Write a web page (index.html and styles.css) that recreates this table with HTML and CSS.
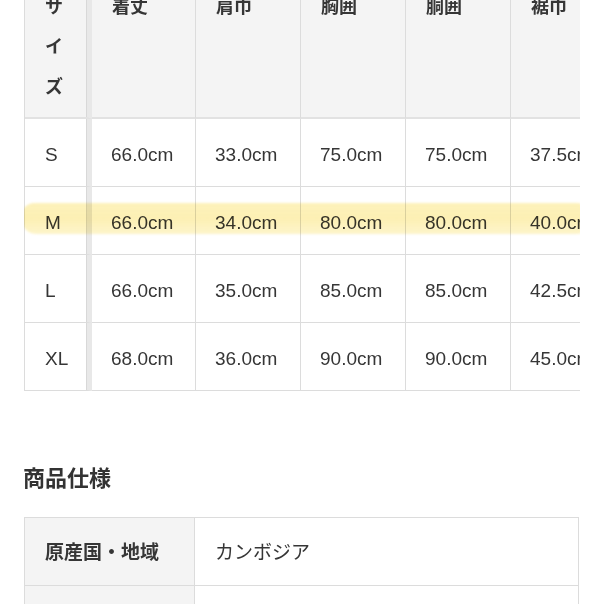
FILE: index.html
```html
<!DOCTYPE html>
<html lang="ja">
<head>
<meta charset="utf-8">
<title>サイズ表</title>
<link rel="stylesheet" href="styles.css">
</head>
<body>
<div class="page">
  <div class="size-wrap">
    <table class="size-table">
      <thead>
        <tr>
          <th class="c-first">サイズ</th>
          <th class="c-2">着丈</th>
          <th class="c-n">肩巾</th>
          <th class="c-n">胸囲</th>
          <th class="c-n">胴囲</th>
          <th class="c-n">裾巾</th>
        </tr>
      </thead>
      <tbody>
        <tr><td class="c-first">S</td><td>66.0cm</td><td>33.0cm</td><td>75.0cm</td><td>75.0cm</td><td>37.5cm</td></tr>
        <tr><td class="c-first">M</td><td>66.0cm</td><td>34.0cm</td><td>80.0cm</td><td>80.0cm</td><td>40.0cm</td></tr>
        <tr><td class="c-first">L</td><td>66.0cm</td><td>35.0cm</td><td>85.0cm</td><td>85.0cm</td><td>42.5cm</td></tr>
        <tr><td class="c-first">XL</td><td>68.0cm</td><td>36.0cm</td><td>90.0cm</td><td>90.0cm</td><td>45.0cm</td></tr>
      </tbody>
    </table>
    <div class="marker"></div>
  </div>

  <h2 class="spec-title">商品仕様</h2>
  <table class="spec-table">
    <tbody>
      <tr><th>原産国・地域</th><td>カンボジア</td></tr>
      <tr><th>素材</th><td>綿100%</td></tr>
    </tbody>
  </table>
</div>
</body>
</html>
```

FILE: styles.css
```css
html, body {
  margin: 0;
  padding: 0;
  background: #ffffff;
}

body {
  font-family: "Liberation Sans", "Noto Sans CJK JP", sans-serif;
  color: #363636;
  overflow: hidden;
}

.page {
  display: flex;
  flex-direction: column;
  align-items: flex-start;
}

.size-wrap {
  position: relative;
  margin-top: -35px;
  margin-left: 24px;
  width: 556px;
  overflow: hidden;
}

.size-table {
  border-collapse: separate;
  border-spacing: 0;
  table-layout: fixed;
  width: 592px;
  border-left: 1px solid #dcdcdc;
  box-shadow: 0 2px 2px rgba(0, 0, 0, 0.04);
}

.size-table th,
.size-table td {
  box-sizing: border-box;
  border-right: 1px solid #dcdcdc;
  border-bottom: 1px solid #dcdcdc;
  text-align: left;
  padding: 21px 0 17px 19px;
  line-height: 29px;
  font-size: 19px;
  font-weight: normal;
  white-space: nowrap;
}

.size-table th {
  background: #f4f4f4;
  font-family: "Noto Sans CJK JP", "Liberation Sans", sans-serif;
  font-weight: bold;
  font-size: 18px;
  line-height: 40px;
  vertical-align: top;
  padding: 20px 0 12px 20px;
  border-bottom: 2px solid #e2e2e2;
}

.size-table th.c-first {
  white-space: normal;
  padding-right: 22px;
}

.size-table .c-first {
  width: 67px;
  border-right: 5px solid #e8e8e8;
  box-shadow: inset -1px 0 0 #d8d8d8;
}

.size-table td.c-first {
  padding-left: 20px;
}

.size-table .c-2 {
  width: 104px;
}

.size-table .c-n {
  width: 105px;
}

.marker {
  position: absolute;
  left: -2px;
  top: 238px;
  width: 562px;
  height: 31px;
  background: linear-gradient(180deg, rgba(251, 228, 120, 0.5) 0%, rgba(251, 228, 118, 0.55) 50%, rgba(251, 232, 140, 0.45) 100%);
  border-radius: 12px 6px 6px 14px;
  mix-blend-mode: multiply;
  filter: blur(1px);
}

.spec-title {
  margin: 69px 0 25px 23px;
  font-family: "Noto Sans CJK JP", "Liberation Sans", sans-serif;
  font-size: 22px;
  line-height: 32px;
  font-weight: bold;
  color: #333333;
}

.spec-table {
  margin-left: 24px;
  width: 555px;
  border-collapse: separate;
  border-spacing: 0;
  table-layout: fixed;
  border-top: 1px solid #dcdcdc;
  border-left: 1px solid #dcdcdc;
}

.spec-table th,
.spec-table td {
  box-sizing: border-box;
  border-right: 1px solid #dcdcdc;
  border-bottom: 1px solid #dcdcdc;
  text-align: left;
  font-family: "Noto Sans CJK JP", "Liberation Sans", sans-serif;
  font-size: 19px;
  line-height: 29px;
  padding: 18px 0 20px 20px;
}

.spec-table th {
  width: 170px;
  background: #f4f4f4;
  font-weight: bold;
}

.spec-table td {
  font-weight: normal;
  background: #ffffff;
}
```
